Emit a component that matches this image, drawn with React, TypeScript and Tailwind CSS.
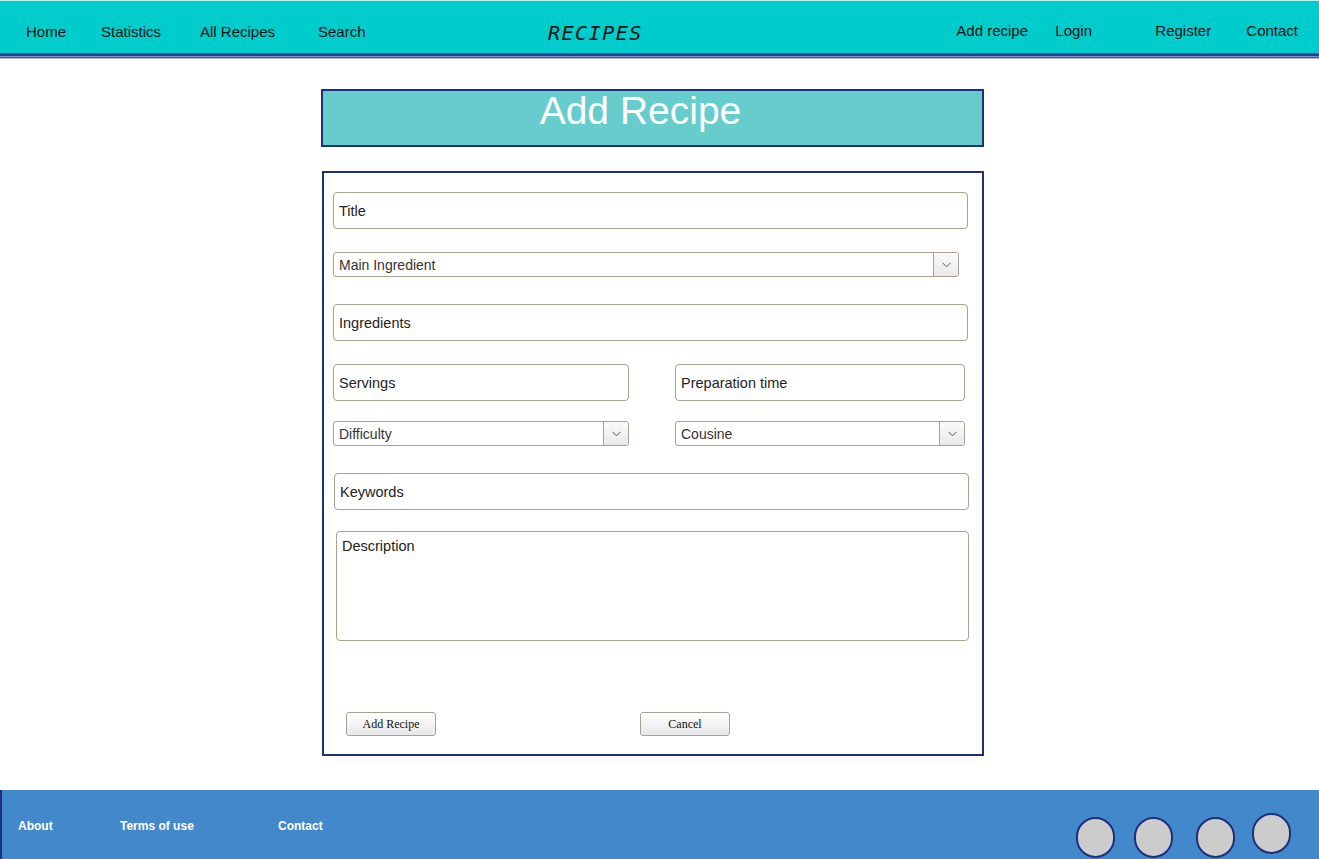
import type { ReactNode } from 'react'

const LEFT_NAV = [
  { label: 'Home', w: 'w-[75px]' },
  { label: 'Statistics', w: 'w-[99px]' },
  { label: 'All Recipes', w: 'w-[118px]' },
  { label: 'Search', w: 'w-[230px]' },
]

const RIGHT_NAV = [
  { label: 'Add recipe', w: 'w-[99px]' },
  { label: 'Login', w: 'w-[100px]' },
  { label: 'Register', w: 'w-[91px]' },
  { label: 'Contact', w: '' },
]

function TextInput({ placeholder, className }: { placeholder: string; className: string }) {
  return (
    <input
      type="text"
      placeholder={placeholder}
      className={`block h-[37px] rounded-[4px] border border-[#a9a191] bg-white px-[5px] text-[14.5px] text-[#222] outline-none placeholder:text-[#222] ${className}`}
    />
  )
}

function Select({ label, className }: { label: string; className: string }) {
  return (
    <div
      className={`flex h-[25px] items-stretch overflow-hidden rounded-[3px] border border-[#a9a191] bg-white ${className}`}
    >
      <div className="flex flex-1 items-center pl-[5px] pt-px text-[14px] text-[#333]">{label}</div>
      <div className="flex w-[25px] items-center justify-center border-l border-[#a9a191] bg-gradient-to-b from-[#fafafa] to-[#e9e9e9]">
        <svg width="9" height="6" viewBox="0 0 9 6" fill="none">
          <polyline points="0.5,0.8 4.5,4.8 8.5,0.8" stroke="#555" strokeWidth="1" />
        </svg>
      </div>
    </div>
  )
}

function Button({ children, className }: { children: ReactNode; className: string }) {
  return (
    <button
      type="button"
      className={`h-[24px] w-[90px] rounded-[3px] border border-[#a9a191] bg-gradient-to-b from-white to-[#e8e8e8] text-[12px] text-[#111] ${className}`}
      style={{ fontFamily: '"Liberation Serif", "Times New Roman", serif' }}
    >
      {children}
    </button>
  )
}

function Circle({ className }: { className: string }) {
  return <div className={`h-[41px] w-[39px] rounded-full border-2 border-[#1e2f7c] bg-[#cccccc] ${className}`} />
}

export default function App() {
  return (
    <div
      className="flex h-[859px] flex-col bg-white"
      style={{ fontFamily: '"Liberation Sans", Arial, sans-serif' }}
    >
      {/* header */}
      <header>
        <div className="h-px bg-[#bff0f0]" />
        <div className="flex h-[52px] items-center bg-[#00cccc] pt-[10px] text-[15px] text-[#111]">
          <nav className="flex pl-[26px]">
            {LEFT_NAV.map((n) => (
              <div key={n.label} className={n.w}>
                {n.label}
              </div>
            ))}
          </nav>
          <div
            className="pt-[2px] text-[20px] italic tracking-[1.5px] text-[#111]"
            style={{ fontFamily: '"DejaVu Sans Mono", "Liberation Mono", monospace' }}
          >
            RECIPES
          </div>
          <nav className="ml-auto -mt-[2px] flex pr-[21px]">
            {RIGHT_NAV.map((n) => (
              <div key={n.label} className={n.w}>
                {n.label}
              </div>
            ))}
          </nav>
        </div>
        <div className="h-px bg-[#137f8e]" />
        <div className="h-[2px] bg-[#2d3c94]" />
        <div className="h-px bg-[#8494d4]" />
        <div className="h-px bg-[#3f4fa0]" />
        <div className="h-px bg-[#b9b9c6]" />
      </header>

      {/* main */}
      <main className="flex flex-1 flex-col items-start pl-[321px]">
        <div className="mt-[30px] flex h-[58px] w-[663px] justify-center border-2 border-[#1e2f7c] bg-[#66cccc] pr-[24px]">
          <h1 className="text-[39px] leading-[40px] text-white">Add Recipe</h1>
        </div>

        <form className="ml-px mt-[24px] flex h-[585px] w-[662px] flex-col border-2 border-[#1e2f7c] pl-[9px] pt-[19px]">
          <TextInput placeholder="Title" className="w-[635px]" />
          <Select label="Main Ingredient" className="mt-[23px] w-[626px]" />
          <TextInput placeholder="Ingredients" className="mt-[27px] w-[635px]" />
          <div className="mt-[23px] flex gap-[46px]">
            <TextInput placeholder="Servings" className="w-[296px]" />
            <TextInput placeholder="Preparation time" className="w-[290px]" />
          </div>
          <div className="mt-[20px] flex gap-[46px]">
            <Select label="Difficulty" className="w-[296px]" />
            <Select label="Cousine" className="w-[290px]" />
          </div>
          <TextInput placeholder="Keywords" className="ml-px mt-[27px] w-[635px]" />
          <textarea
            placeholder="Description"
            className="ml-[3px] mt-[21px] block h-[110px] w-[633px] resize-none rounded-[4px] border border-[#a9a191] px-[5px] pt-[4px] text-[14.5px] text-[#222] outline-none placeholder:text-[#222]"
          />
          <div className="mt-[71px] flex pl-[13px]">
            <Button className="">Add Recipe</Button>
            <Button className="ml-[204px]">Cancel</Button>
          </div>
        </form>
      </main>

      {/* footer */}
      <footer className="flex h-[69px] items-start border-l-2 border-[#1e2f7c] bg-[#4488cc] text-[12px] font-bold text-white">
        <nav className="flex pl-[16px] pt-[27px]">
          <a className="w-[102px]">About</a>
          <a className="w-[158px]">Terms of use</a>
          <a>Contact</a>
        </nav>
        <div className="ml-auto flex items-start pr-[28px] pt-[26px]">
          <Circle className="mt-px" />
          <Circle className="ml-[19px] mt-px" />
          <Circle className="ml-[23px] mt-px" />
          <Circle className="ml-[17px] -mt-[3px]" />
        </div>
      </footer>
    </div>
  )
}
